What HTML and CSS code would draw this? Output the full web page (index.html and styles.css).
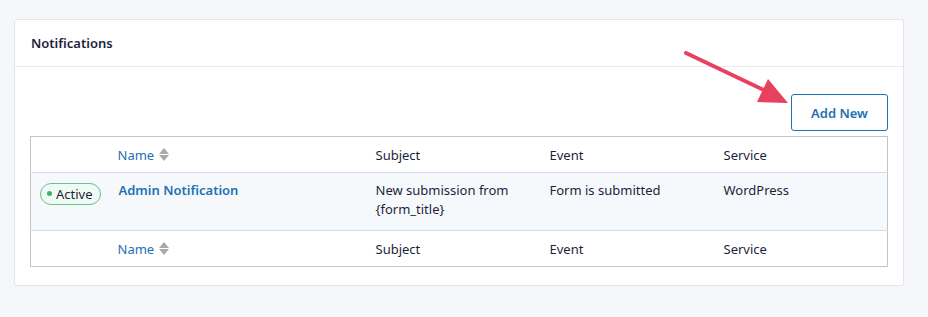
FILE: index.html
```html
<!DOCTYPE html>
<html lang="en">
<head>
    <meta charset="UTF-8">
    <title>Notifications</title>
    <link rel="stylesheet" href="styles.css">
</head>
<body>
<div class="card">
    <div class="card-head">Notifications</div>
    <div class="card-body">
        <div class="actions">
            <button class="btn">Add New</button>
        </div>
        <table class="list">
            <colgroup>
                <col class="c-status">
                <col class="c-name">
                <col class="c-subject">
                <col class="c-event">
                <col>
            </colgroup>
            <thead>
                <tr>
                    <th></th>
                    <th><a class="sort">Name <span class="arrows"><i class="up"></i><i class="down"></i></span></a></th>
                    <th>Subject</th>
                    <th>Event</th>
                    <th>Service</th>
                </tr>
            </thead>
            <tbody>
                <tr>
                    <td><span class="badge"><i class="dot"></i>Active</span></td>
                    <td><a class="title">Admin Notification</a></td>
                    <td>New submission from<br>{form_title}</td>
                    <td>Form is submitted</td>
                    <td>WordPress</td>
                </tr>
            </tbody>
            <tfoot>
                <tr>
                    <th></th>
                    <th><a class="sort">Name <span class="arrows"><i class="up"></i><i class="down"></i></span></a></th>
                    <th>Subject</th>
                    <th>Event</th>
                    <th>Service</th>
                </tr>
            </tfoot>
        </table>
    </div>
</div>

<!-- annotation arrow -->
<svg class="pointer" width="928" height="317" viewBox="0 0 928 317">
    <line x1="686" y1="53" x2="768" y2="92" stroke="#e8405f" stroke-width="4" stroke-linecap="round"/>
    <polygon points="757,102 768,79 788,103" fill="#e8405f"/>
</svg>
</body>
</html>
```

FILE: styles.css
```css
body {
    margin: 0;
    background: #f5f7fb;
    font-family: "Noto Sans", "Open Sans", sans-serif;
    font-size: 13px;
    color: #1e1f3a;
}
.card {
    margin: 19px 0 0 14px;
    width: 888px;
    background: #fff;
    border: 1px solid #e3e5ee;
    border-radius: 3px;
    box-shadow: 0 1px 2px rgba(0,0,0,0.04);
}
.card-head {
    height: 46px;
    line-height: 46px;
    padding: 0 16px;
    font-weight: 600;
    border-bottom: 1px solid #e8e9f1;
}
.card-body {
    padding: 27px 15px 18px;
}
.actions {
    display: flex;
    justify-content: flex-end;
    margin-bottom: 5px;
}
.btn {
    width: 97px;
    height: 37px;
    background: #fff;
    border: 1px solid #2271b1;
    border-radius: 3px;
    color: #2271b1;
    font: 600 13px "Noto Sans", sans-serif;
}
.list {
    width: 100%;
    table-layout: fixed;
    border-collapse: collapse;
    border: 1px solid #c3c4c7;
}
.c-status { width: 79px; }
.c-name { width: 258px; }
.c-subject { width: 174px; }
.c-event { width: 174px; }
.list th, .list td {
    text-align: left;
    font-weight: 400;
    padding: 0 8px;
    vertical-align: top;
}
.list thead th, .list tfoot th {
    height: 35px;
    vertical-align: middle;
}
.list tbody td {
    background: #f6f9fc;
    border-top: 1px solid #d6d9e8;
    border-bottom: 1px solid #d6d9e8;
    padding-top: 8px;
    padding-bottom: 11px;
    line-height: 19px;
}
.list tbody td:first-child {
    padding-left: 9px;
    padding-top: 9px;
}
.sort, .title {
    color: #2271b1;
}
.sort {
    display: inline-flex;
    align-items: center;
    gap: 5px;
}
.title {
    font-weight: 600;
    padding-left: 1px;
}
.arrows {
    display: inline-flex;
    flex-direction: column;
    gap: 1px;
}
.arrows i {
    width: 0;
    height: 0;
    border-left: 5px solid transparent;
    border-right: 5px solid transparent;
}
.arrows .up { border-bottom: 6px solid #a7aaad; }
.arrows .down { border-top: 6px solid #a7aaad; }
.badge {
    display: inline-flex;
    align-items: center;
    height: 20px;
    padding: 0 7px 0 6px;
    border: 1px solid #68c28f;
    border-radius: 11px;
    background: #f0faf4;
    color: #1e1f3a;
    line-height: 20px;
}
.dot {
    width: 5px;
    height: 5px;
    border-radius: 50%;
    background: #3fb06f;
    margin-right: 4px;
}
.pointer {
    position: absolute;
    left: 0;
    top: 0;
    pointer-events: none;
}
```
